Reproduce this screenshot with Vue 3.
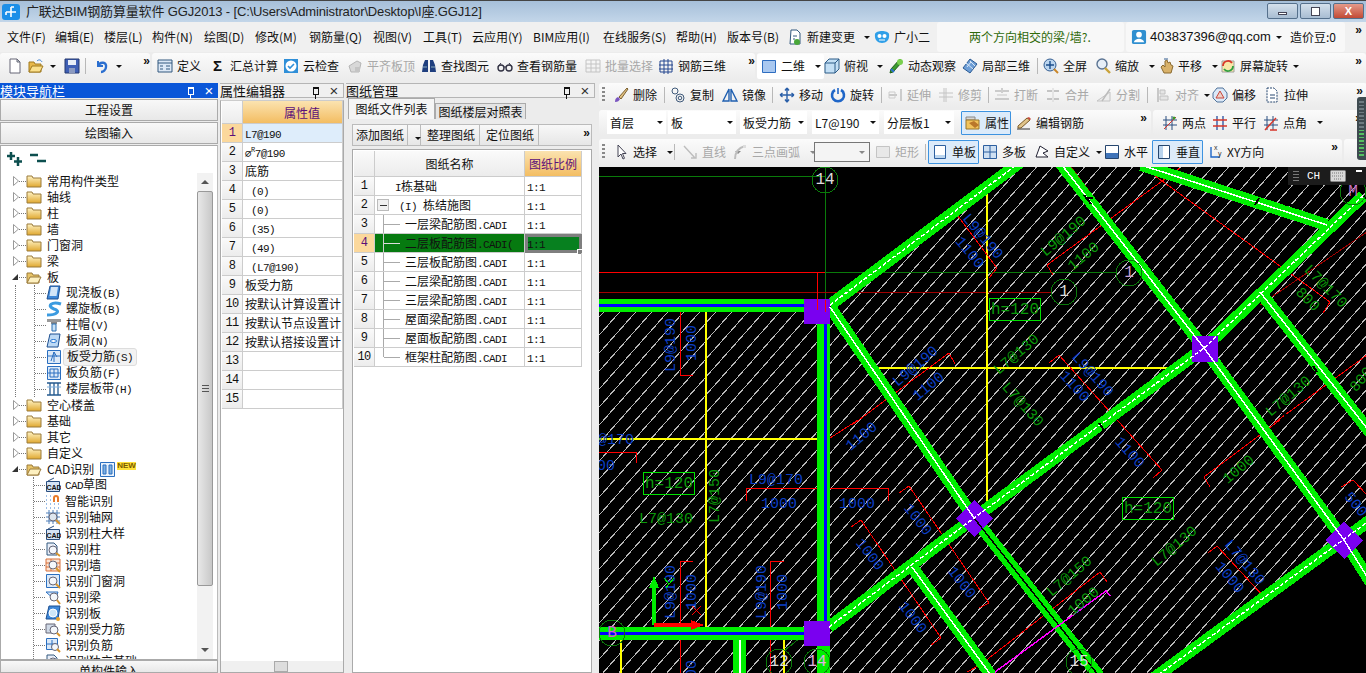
<script setup>
// menu entries with the distance to the next one
const menus = [['文件(F)', 48], ['编辑(E)', 49], ['楼层(L)', 48], ['构件(N)', 52], ['绘图(D)', 51], ['修改(M)', 54], ['钢筋量(Q)', 64], ['视图(V)', 50], ['工具(T)', 49], ['云应用(Y)', 61], ['BIM应用(I)', 70], ['在线服务(S)', 73], ['帮助(H)', 51], ['版本号(B)', 60]]

const icons = {
  page: '<path d="M3 1h7l3 3v11H3z" fill="#fff" stroke="#667"/><path d="M10 1v3h3z" fill="#cdd" stroke="#667"/>',
  open: '<path d="M1 14V4h5l1 2h6v8z" fill="#e8b84a" stroke="#a07a20"/><path d="M1 14l3-6h11l-3 6z" fill="#fbe08c" stroke="#a07a20"/><path d="M9 3c2-2 4-1 5 1" fill="none" stroke="#3a7fd0"/>',
  save: '<path d="M1 1h14v14H1z" fill="#3f5fb5" stroke="#24386f"/><path d="M4 2h8v5H4z" fill="#e8eef8"/><path d="M5 10h6v5H5z" fill="#8b9ac0"/>',
  undo: '<path d="M4 3v5h5" fill="none" stroke="#2b6fd0" stroke-width="2"/><path d="M4 8c2-5 9-4 8 1 0 3-3 5-5 5" fill="none" stroke="#2b6fd0" stroke-width="2.4"/>',
  def: '<path d="M1 2h14v12H1z" fill="#dce8f6" stroke="#33597f"/><path d="M1 5h14M3 8h3M3 11h3M9 8h4M9 11h4" stroke="#33597f"/>',
  sigma: '<text x="3" y="13" font-size="15" font-weight="700" font-family="Liberation Sans" fill="#111">Σ</text>',
  check: '<path d="M1 1h14v14H1z" fill="#2f8fd8"/><circle cx="8" cy="8" r="5.5" fill="#fff"/><path d="M5 8l2 2 4-4" fill="none" stroke="#2f8fd8" stroke-width="1.6"/>',
  flat: '<path d="M2 8l8-5 4 2-2 9H4z" fill="#d8d8d8" stroke="#b5b5b5"/><path d="M8 9h5v5H8z" fill="#c4c4c4"/>',
  binoc: '<path d="M2 7l2-5h3v12H1zM14 7l-2-5H9v12h6z" fill="#1f3f7f"/><path d="M2 9h4M10 9h4" stroke="#8ab" />',
  glasses: '<circle cx="4" cy="10" r="3" fill="none" stroke="#334" stroke-width="1.4"/><circle cx="12" cy="10" r="3" fill="none" stroke="#334" stroke-width="1.4"/><path d="M7 9h2M1 9l3-4M15 9l-3-4" stroke="#334"/>',
  grayGrid: '<path d="M1 2h14v12H1zM1 6h14M1 10h14M6 2v12M11 2v12" fill="none" stroke="#c4c4c4"/>',
  grid3d: '<path d="M2 3h12v11H2zM1 7h14M1 11h14M6 1v15M10 1v15" fill="none" stroke="#24478f"/>',
  square: '<path d="M1.500 2.500h13v12h-13z" fill="#a9c8f0" stroke="#2e6dc0"/>',
  cube: '<path d="M1 5l4-4h10v10l-4 4H1z" fill="#c3dff5" stroke="#2c5c88"/><path d="M1 5h10v10M11 5l4-4" fill="none" stroke="#2c5c88"/>',
  orbit: '<path d="M2 15l3-1 9-10-2-3-9 10z" fill="#3b9b2f" stroke="#1d5c15"/><circle cx="12" cy="4" r="3" fill="#7ad04e"/><path d="M3 11l3 3" stroke="#2b6fd0" stroke-width="2"/>',
  local: '<path d="M8 1l7 5-7 9-7-5z" fill="#6d9ed6" stroke="#2a5a94"/><path d="M4 5l7 6M8 3l5 5M5 9l4-5" stroke="#dce8f6"/>',
  full: '<circle cx="7" cy="7" r="6" fill="#bcd6ef" stroke="#345e92"/><path d="M7 3v8M3 7h8" stroke="#1b4d8c" stroke-width="1.4"/><path d="M11 11l4 4" stroke="#c9862a" stroke-width="2"/>',
  zoom: '<circle cx="7" cy="6" r="5" fill="#e6eef7" stroke="#5a7392" stroke-width="1.4"/><path d="M10 10l5 5" stroke="#c9a23a" stroke-width="2.400"/>',
  hand: '<path d="M3 9l3 6h7l2-7-2-1-1-3-2 1-1-3-2 1v6L5 7z" fill="#d9b26a" stroke="#8a6a30"/><path d="M6 1h4" stroke="#345e92"/>',
  rotScreen: '<path d="M2 3h12v11H2z" fill="#f7e7a8" stroke="#a0a0a0"/><path d="M3 8a5 5 0 0 1 9-3" fill="none" stroke="#d8362a" stroke-width="1.8"/><path d="M13 8a5 5 0 0 1-9 3" fill="none" stroke="#2f9f3f" stroke-width="1.8"/>',
  del: '<path d="M2 15c0-3 1-4 3-5l2 2c-1 2-2 3-5 3z" fill="#7a55c0"/><path d="M6 10l8-9 1 1-7 10z" fill="#e0c080" stroke="#7a6030"/>',
  copy: '<circle cx="5" cy="4" r="3" fill="none" stroke="#405a7a"/><circle cx="10" cy="11" r="4" fill="none" stroke="#405a7a"/><circle cx="10" cy="11" r="1.800" fill="none" stroke="#405a7a"/>',
  mirror: '<path d="M7 2v12H1zM9 2v12h6z" fill="none" stroke="#1f5fb0" stroke-width="1.400"/>',
  move: '<path d="M8 1v14M1 8h14M8 1L6 3.500M8 1l2 2.500M8 15l-2-2.500M8 15l2-2.500M1 8l2.500-2M1 8l2.500 2M15 8l-2.500-2M15 8l-2.500 2" fill="none" stroke="#2a5fa8" stroke-width="1.400"/>',
  rot: '<path d="M5 3a6 6 0 1 0 6 0" fill="none" stroke="#1f66c8" stroke-width="2.600"/><path d="M8 1v6" stroke="#1f66c8" stroke-width="1.600"/>',
  extend: '<path d="M14 2v12M2 8h8" fill="none" stroke="#bbb" stroke-width="1.400"/><path d="M2 5h6v6H2z" fill="none" stroke="#ccc"/>',
  trim: '<path d="M1 6h14M1 10h14M8 1v14M6 1v14" stroke="#c4c4c4"/>',
  cut: '<path d="M1 4h6M9 4h6M1 12h14M8 1v5" stroke="#bdbdbd" stroke-width="1.400"/><path d="M3 7h10v2H3z" fill="#ddd"/>',
  merge: '<path d="M2 4h5M9 4h5M2 12h5M9 12h5" stroke="#c4c4c4" stroke-width="2"/><path d="M8 1v14" stroke="#d4d4d4"/>',
  split: '<path d="M1 14h13V5z" fill="#eee" stroke="#c4c4c4"/><path d="M6 14l8-12" stroke="#bbb" stroke-width="1.400"/>',
  align: '<path d="M3 1v14" stroke="#b5b5b5" stroke-width="1.400"/><path d="M5 3h5v4H5zM5 9h8v4H5z" fill="#e5e5e5" stroke="#c0c0c0"/>',
  offset: '<path d="M5 1h6l4 5v5l-4 4H5l-4-4V6z" fill="#dbe9f8" stroke="#50739a"/><path d="M8 4l4 7H4z" fill="#ecd0c8" stroke="#c9473a"/>',
  stretch: '<path d="M3 1h7l3 3v11H3z" fill="#fff" stroke="#26466f" stroke-dasharray="2 1"/><path d="M6 8h5M6 11h5" stroke="#26466f"/>',
  attr: '<path d="M1 2h9v3H1z" fill="#d6d6d6" stroke="#888"/><path d="M1 5h13v9H1z" fill="#f2c45c" stroke="#99762a"/><path d="M4 8l6 5 4-3-5-4z" fill="#b9772a"/>',
  edit: '<path d="M1 14h13" stroke="#333"/><path d="M2 11l9-8 3 2-9 8H2z" fill="#e0c48a" stroke="#7a5a28"/><path d="M11 3l2-1 2 2-1 1" fill="#c9473a"/>',
  twoPt: '<path d="M4 15V1M10 15V1M1 10h14M1 5h14" stroke="#2a4f80"/><path d="M2 14L14 2" stroke="#d8362a"/><circle cx="12" cy="3" r="1.500" fill="#3a9b2f"/>',
  par: '<path d="M5 1v14M11 1v14" stroke="#2a4f9f" stroke-width="1.300"/><path d="M1 5h14M1 11h14" stroke="#d8362a" stroke-width="1.300"/>',
  angle: '<path d="M4 1v14M10 1v14M1 5h14M1 10h14" stroke="#2a4f80"/><path d="M2 15L13 3M7 15h7" stroke="#d8362a" stroke-width="1.400"/>',
  arrow: '<path d="M5 1v12l3-3 2 5 1.500-.7-2-4.800h3.500z" fill="#fff" stroke="#445"/>',
  lineGray: '<path d="M2 2l11 12M9 14h5V9" fill="none" stroke="#bdbdbd" stroke-width="1.400"/>',
  arcGray: '<path d="M3 15C3 8 6 4 13 2" fill="none" stroke="#bdbdbd" stroke-width="2"/><path d="M11 1h3v3h-3z" fill="#ddd"/>',
  rect: '<path d="M1.500 2.500h13v11h-13z" fill="#e8e8e8" stroke="#c4c4c4"/>',
  single: '<path d="M2.500 1.500h11v13h-11z" fill="#fff" stroke="#2d5f9f"/><path d="M3 11h10v3H3z" fill="#bcd6ef"/>',
  multi: '<path d="M1.500 1.500h13v13h-13zM8 1v14M1 8h14" fill="#cfe0f2" stroke="#2d5f9f"/>',
  custom: '<path d="M2 13L6 2l8 5-5 2 5 4z" fill="#fff" stroke="#223"/>',
  horiz: '<path d="M1.500 1.500h13v13h-13z" fill="#fff" stroke="#26466f"/><path d="M2 9h12v5H2z" fill="#3f73b8"/>',
  vert: '<path d="M2.500 1.500h11v13h-11z" fill="#fff" stroke="#26466f"/><path d="M3 2h4v12H3z" fill="#b8d3ee"/>',
  xy: '<path d="M4 3v10h9" fill="none" stroke="#1f66c8" stroke-width="1.400"/><text x="7" y="6" font-size="7" font-family="Liberation Sans" fill="#333">x</text><text x="11" y="12" font-size="7" font-family="Liberation Sans" fill="#333">y</text>',
  bell: '<path d="M4 1h6l3 3v11H3z" fill="#fff" stroke="#33597f"/><path d="M6 7h4M6 10h2" stroke="#33597f"/><circle cx="10" cy="13" r="3" fill="#4aa83a"/>',
  robot: '<path d="M1 5c1-4 13-4 14 0 1 6-3 9-7 9s-8-3-7-9z" fill="#2f9fe8"/><circle cx="5.500" cy="7" r="2" fill="#fff"/><circle cx="10.500" cy="7" r="2" fill="#fff"/><path d="M5 11h6" stroke="#fff"/>',
  user: '<rect x="1" y="1" width="15" height="15" rx="2" fill="#2f8fd0"/><circle cx="8.500" cy="6" r="3" fill="#fff"/><path d="M3 14c1-5 10-5 11 0z" fill="#fff"/>',
  // tree
  slab: '<path d="M4 1h10l-2 13H1z" fill="#3f88d8" stroke="#1d4f90"/><path d="M5 2h7l-1.500 9H3.500z" fill="#d4e6f8"/>',
  spiral: '<path d="M15 3C6 0 0 5 8 8c7 2 3 6-7 6" fill="none" stroke="#3b9be0" stroke-width="3"/>',
  cap: '<path d="M1 2h14v3H1z" fill="#9a9a9a"/><path d="M5 5h6v2H5z" fill="#888"/><path d="M6 7h4v7H6z" fill="#c9e2f7" stroke="#2a6fb0"/>',
  hole: '<path d="M4 1h10l-2 13H1z" fill="#bcd9f5" stroke="#1d4f90"/><ellipse cx="7.500" cy="8" rx="3" ry="1.500" fill="#fff" stroke="#1d6fd0"/>',
  rebar: '<path d="M1.500 1.500h13v13h-13z" fill="#dbe9f8" stroke="#2a6fc0"/><path d="M1 7h14M8 3v10" stroke="#2a6fc0"/><path d="M5 12l3-9 3 5" fill="none" stroke="#2a6fc0"/>',
  neg: '<path d="M1.500 1.500h13v13h-13z" fill="#dbe9f8" stroke="#2a6fc0"/><path d="M4 4h8v8H4zM1 8h14M8 4v8" fill="none" stroke="#2a6fc0"/>',
  band: '<path d="M1 2h14M1 14h14M4 2v12M8 2v12M12 2v12" stroke="#24598f" stroke-width="1.300"/><path d="M1 6h14" stroke="#7fb0e0"/>',
  cad: '<path d="M1.500 4.500h13v10h-13z" fill="#d6e4f5" stroke="#2a4f80"/><text x="1.500" y="13" font-size="7" font-weight="700" font-family="Liberation Sans" fill="#111">CAD</text><path d="M3 4l6-3" stroke="#2a4f80"/>',
  magnet: '<path d="M1 3h1M5 3h1M1 7h1M5 7h1M1 11h1M5 11h1M9 11h1M13 11h1M1 15h1M5 15h1M9 15h1M13 15h1" stroke="#3a7fd0"/><path d="M8 9V5a3 3 0 0 1 6 0v4h-2V5a1 1 0 0 0-2 0v4z" fill="#e87a2a"/>',
  findGrid: '<path d="M1 4h14M1 8h14M1 12h14M4 1v14M8 1v14M12 1v14" stroke="#4f7fb8"/><circle cx="8" cy="8" r="4" fill="#dfe6ee" stroke="#667"/><path d="M11 11l4 4" stroke="#d8942a" stroke-width="2"/>',
  findCol: '<path d="M2 2h7l3 3v9H2z" fill="#e8eef8" stroke="#33597f"/><circle cx="8" cy="9" r="4" fill="#f4f7fb" stroke="#667"/><path d="M11 12l4 3" stroke="#d8942a" stroke-width="2"/>',
  findWall: '<path d="M1 2h14v12H1zM1 6h14M1 10h14M6 2v4M11 6v4M6 10v4" fill="#fbe4d4" stroke="#d8703a"/><circle cx="8" cy="8" r="4" fill="#f4f7fb" stroke="#667"/><path d="M11 11l4 4" stroke="#d8942a" stroke-width="2"/>',
  findDoor: '<path d="M1.500 1.500h13v13h-13z" fill="#dbe9f8" stroke="#2a6fc0"/><circle cx="8" cy="8" r="4" fill="#f4f7fb" stroke="#667"/><path d="M11 11l4 4" stroke="#d8942a" stroke-width="2"/>',
  findBeam: '<path d="M1 3h12l-3 8z" fill="#dbe9f8" stroke="#2a6fc0"/><circle cx="9" cy="8" r="4" fill="#f4f7fb" stroke="#667"/><path d="M12 11l3 4" stroke="#d8942a" stroke-width="2"/>',
  findSlab: '<path d="M4 1h11l-2 13H1z" fill="#3f88d8" stroke="#1d4f90"/><circle cx="8" cy="8" r="4" fill="#cde6f8" stroke="#fff"/><circle cx="13" cy="14" r="2" fill="#e8a02a"/>',
  findBar: '<path d="M1 3h9v9H1z" fill="#cfd9e6" stroke="#667"/><circle cx="9" cy="9" r="4" fill="#f4f7fb" stroke="#667"/><path d="M12 12l3 3" stroke="#d8942a" stroke-width="2"/>',
  findNeg: '<path d="M1.500 1.500h11v11h-11zM1 7h12M7 3v8" fill="#dbe9f8" stroke="#2a6fc0"/><circle cx="10" cy="10" r="3.500" fill="#f4f7fb" stroke="#667"/><path d="M12 12l3 3" stroke="#d8942a" stroke-width="2"/>',
}

// width = distance to the next item's left edge in the toolbar
function T(i, t, w, opts = {}) {
  return { i, t, w, ...opts }
}
const SEP = w => ({ sep: true, w })

const row1a = [T('page', '', 21), T('open', '', 36, { arrow: 2 }), T('save', '', 21), SEP(9), T('undo', '', 30, { arrow: 2 })]
const row1b = [
  T('def', '定义', 53), T('sigma', '汇总计算', 73), T('check', '云检查', 64), T('flat', '平齐板顶', 74, { gray: true }),
  T('binoc', '查找图元', 76), T('glasses', '查看钢筋量', 88), T('grayGrid', '批量选择', 73, { gray: true }), T('grid3d', '钢筋三维', 68),
]
const row1c = [
  T('square', '二维', 67, { white: true, arrow: 6 }), T('cube', '俯视', 64, { arrow: 5 }), T('orbit', '动态观察', 74), T('local', '局部三维', 75), SEP(6),
  T('full', '全屏', 52), T('zoom', '缩放', 63, { arrow: 6 }), T('hand', '平移', 62, { arrow: 6 }), T('rotScreen', '屏幕旋转', 90, { arrow: 1 }),
]
const row2 = [
  T('del', '删除', 51), SEP(6), T('copy', '复制', 52), T('mirror', '镜像', 50), SEP(7), T('move', '移动', 51), T('rot', '旋转', 51), SEP(6),
  T('extend', '延伸', 51, { gray: true }), T('trim', '修剪', 50, { gray: true }), SEP(6), T('cut', '打断', 51, { gray: true }), T('merge', '合并', 51, { gray: true }),
  T('split', '分割', 51, { gray: true }), SEP(8), T('align', '对齐', 57, { gray: true, arrow: 1 }), T('offset', '偏移', 52), T('stretch', '拉伸', 50),
]
const selects = [
  { t: '首层', w: 59, m: 0 }, { t: '板', w: 68, m: 2 }, { t: '板受力筋', w: 67, m: 4 },
  { t: 'L7@190', w: 67, m: 5 }, { t: '分层板1', w: 70, m: 5 },
]
const row3a = [T('attr', '属性', 50, { on: true }), T('edit', '编辑钢筋', 70, { m: 5 })]
const row3b = [T('twoPt', '两点', 50), T('par', '平行', 51), T('angle', '点角', 56, { arrow: 6 })]
const row4a = [T('arrow', '选择', 61, { arrow: 6 }), SEP(8), T('lineGray', '直线', 50, { gray: true }), T('arcGray', '三点画弧', 82, { gray: true, arrow: 6 })]
const row4b = [
  T('rect', '矩形', 50, { gray: true, m: 5 }), SEP(3), T('single', '单板', 51, { on: true }), T('multi', '多板', 52, { m: 3 }), T('custom', '自定义', 70, { arrow: 2 }),
  T('horiz', '水平', 48), T('vert', '垂直', 51, { on: true }), T('xy', 'XY方向', 62, { m: 4 }),
]

const tree = [
  { t: '常用构件类型' }, { t: '轴线' }, { t: '柱' }, { t: '墙' }, { t: '门窗洞' }, { t: '梁' },
  {
    t: '板', open: true, more: true,
    kids: [['slab', '现浇板(B)'], ['spiral', '螺旋板(B)'], ['cap', '柱帽(V)'], ['hole', '板洞(N)'], ['rebar', '板受力筋(S)', true], ['neg', '板负筋(F)'], ['band', '楼层板带(H)']],
  },
  { t: '空心楼盖' }, { t: '基础' }, { t: '其它' }, { t: '自定义' },
  {
    t: 'CAD识别', open: true, isNew: true,
    kids: [['cad', 'CAD草图'], ['magnet', '智能识别'], ['findGrid', '识别轴网'], ['cad', '识别柱大样'], ['findCol', '识别柱'], ['findWall', '识别墙'], ['findDoor', '识别门窗洞'], ['findBeam', '识别梁'], ['findSlab', '识别板'], ['findBar', '识别受力筋'], ['findNeg', '识别负筋'], ['findCol', '识别独立基础']],
  },
]

const attrs = ['L7@190', 'R', '底筋', ' (0)', ' (0)', ' (35)', ' (49)', ' (L7@190)', '板受力筋', '按默认计算设置计', '按默认节点设置计', '按默认搭接设置计', '', '', '']

const sheets = [
  ['I栋基础', 0], ['(I) 栋结施图', 1], ['一层梁配筋图.CADI', 2], ['二层板配筋图.CADI(', 2], ['三层板配筋图.CADI', 2],
  ['二层梁配筋图.CADI', 2], ['三层梁配筋图.CADI', 2], ['屋面梁配筋图.CADI', 2], ['屋面板配筋图.CADI', 2], ['框架柱配筋图.CADI', 2],
]

// latin parts use a bitmap-ish narrow mono, like the old Windows grid font
function runs(s) {
  return (s.match(/[\x20-\x7e]+|[^\x20-\x7e]+/g) || []).map(x => ({ x, lat: /^[\x20-\x7e]/.test(x) }))
}

// --- drawing ---
const beams = [
  { p: '829,305 1022,160', c: '#fff', dash: '4 2' },
  { p: '829,307 973,518', c: '#fff' },
  { p: '973,518 1098,676', c: '#000' },
  { p: '1057,160 1203,348 1343,540 1372,586', c: '#fff' },
  { p: '1140,165 1326,225', c: '#fff' },
  { p: '828,627 973,518 1203,348 1362,196', c: '#fff', dash: '4 2' },
  { p: '1259,292 1372,436', c: '#fff' },
  { p: '911,567 992,678', c: '#fff' },
  { p: '1153,678 1372,518', c: '#fff', dash: '4 2' },
]
const redLines = [
  '679,302 679,375', '679,302 692,302', '679,375 692,375',
  '851,425 948,353 954,364', '945,218 954,212 996,268 988,278',
  '1046,265 1179,168', '1046,265 1052,275', '1048,363 1058,355 1161,470 1152,478',
  '1143,168 1329,302 1322,313', '1273,423 1366,355',
  '598,452 635,452 635,463', '745,501 745,488 887,488 887,501',
  '898,493 908,486 988,603 978,608', '850,527 860,520 940,638 930,645',
  '692,561 679,561 679,673', '783,561 769,561 769,673',
  '828,446 826,440 857,420',
  '1203,477 1209,487', '1203,477 1279,420', '1106,582 1099,572 979,665 966,672',
  '1207,553 1216,546 1263,597 1256,608', '1340,487 1352,480 1366,495',
]
const darkRed = ['1259,305 1366,232', '1070,167 1196,335', '831,318 915,425']
const labels = [
  ['L9@190', 670, 345, -90, 'b'], ['1000', 691, 343, -90, 'b'], ['L9@190', 915, 367, -40, 'b'], ['1100', 928, 387, -40, 'b'],
  ['L9@190', 981, 237, 50, 'b'], ['1100', 968, 253, 50, 'b'], ['L9@190', 1063, 237, -40, 'g'], ['1100', 1083, 257, -40, 'g'],
  ['L7@130', 1016, 355, -40, 'g'], ['L7@130', 1021, 405, 48, 'g'], ['L9@190', 1091, 375, 48, 'b'], ['1100', 1073, 387, 48, 'b'],
  ['L7@170', 1324, 287, 45, 'g'], ['800', 1306, 300, 45, 'g'], ['L7@130', 1288, 397, -40, 'g'], ['800', 1361, 380, -50, 'g'],
  ['L9@170', 606, 440, 0, 'b'], ['1000', 596, 466, 0, 'b'], ['L7@130', 665, 519, 0, 'g'], ['L7@150', 714, 496, -90, 'g'],
  ['L9@170', 775, 480, 0, 'b'], ['1000', 778, 504, 0, 'b'], ['1000', 856, 504, 0, 'b'],
  ['1000', 916, 520, 52, 'b'], ['1000', 868, 555, 52, 'b'], ['1000', 960, 583, 52, 'b'], ['1000', 911, 618, 52, 'b'],
  ['L9@190', 670, 592, -90, 'b'], ['1000', 691, 592, -90, 'b'], ['L9@190', 761, 592, -90, 'b'], ['1000', 782, 592, -90, 'b'],
  ['1000', 691, 678, -90, 'b'], ['1100', 861, 437, -40, 'b'], ['1100', 1128, 453, 48, 'b'], ['1000', 1238, 470, -40, 'g'],
  ['L7@130', 1174, 547, -40, 'g'], ['L7@150', 1069, 577, -40, 'g'], ['1000', 1083, 602, -40, 'g'],
  ['L7@130', 1243, 563, 50, 'b'], ['1000', 1228, 578, 50, 'b'], ['500', 1354, 505, 50, 'b'],
]
const boxes = [[988, 298], [642, 472], [1121, 497]]
const bubbles = [
  ['14', 824, 180, '#ddd'], ['1', 1063, 292, '#ddd'], ['1', 1128, 273, '#c9a0d0'], ['B', 611, 633, '#d060d0'],
  ['12', 778, 662, '#ddd'], ['14', 816, 662, '#e0b0e0'], ['15', 1078, 662, '#ddd'], ['M', 1352, 192, '#c070c0'],
]
const ticks = ['1083,195 1090,204', '1254,205 1258,198', '1084,198 1092,198', '1284,205 1292,205', '1312,366 1316,372', '1282,412 1288,420', '1098,423 1103,430', '1245,422 1251,430']
const meter = Array.from({ length: 16 }, (_, i) => i)
</script>

<template>
  <div class="app">
    <header class="titlebar">
      <svg class="logo" viewBox="0 0 18 16"><rect width="18" height="16" rx="3" fill="#1c8fe8" /><path d="M9 3v10M4 8h10M9 3h3M4 8v3" fill="none" stroke="#fff" stroke-width="1.600" /></svg>
      <span class="title-text">广联达BIM钢筋算量软件 GGJ2013 - [C:\Users\Administrator\Desktop\I座.GGJ12]</span>
      <div class="winbtns">
        <span class="winbtn"><i class="w-min"></i></span>
        <span class="winbtn"><i class="w-max"></i></span>
        <span class="winbtn close">X</span>
      </div>
    </header>

    <nav class="menubar">
      <span v-for="m in menus" :key="m[0]" class="menu" :style="{ width: m[1] + 'px' }">{{ m[0] }}</span>
      <span class="menu-tool w-change"><svg class="ic" viewBox="0 0 16 16" v-html="icons.bell"></svg>新建变更<b class="caret"></b></span>
      <span class="menu-tool w-guang"><svg class="ic" viewBox="0 0 16 16" v-html="icons.robot"></svg>广小二</span>
      <div class="hint">两个方向相交的梁/墙?.</div>
      <div class="account">
        <svg class="ic" viewBox="0 0 17 17" v-html="icons.user"></svg>
        <span class="mail">403837396@qq.com</span><b class="caret"></b>
        <span class="bean">造价豆:0</span>
      </div>
      <span class="more">»</span>
    </nav>

    <div class="tbar top">
      <div class="tgroup g1a">
        <template v-for="(t, n) in row1a" :key="n">
          <span v-if="t.sep" class="sep" :style="{ width: t.w + 'px' }"></span>
          <span v-else class="tool" :style="{ width: t.w + 'px' }"><svg class="ic" viewBox="0 0 16 16" v-html="icons[t.i]"></svg><b v-if="t.arrow" class="caret" :style="{ marginLeft: t.arrow + 'px' }"></b></span>
        </template>
        <span class="more">»</span>
      </div>
      <div class="tgroup g1b">
        <span v-for="t in row1b" :key="t.t" class="tool" :class="{ gray: t.gray }" :style="{ width: t.w + 'px' }"><svg class="ic" viewBox="0 0 16 16" v-html="icons[t.i]"></svg>{{ t.t }}</span>
        <span class="more">»</span>
      </div>
      <div class="tgroup g1c">
        <template v-for="(t, n) in row1c" :key="n">
          <span v-if="t.sep" class="sep" :style="{ width: t.w + 'px' }"></span>
          <span v-else class="tool" :class="{ white: t.white }" :style="{ width: t.w + 'px' }"><svg class="ic" viewBox="0 0 16 16" v-html="icons[t.i]"></svg>{{ t.t }}<b v-if="t.arrow" class="caret" :style="{ marginLeft: t.arrow + 'px' }"></b></span>
        </template>
        <span class="more">»</span>
      </div>
    </div>

    <div class="main">
      <section class="panel nav">
        <div class="phead active"><span>模块导航栏</span><span class="ptools"><i class="pin"></i><i class="px">×</i></span></div>
        <button class="navbtn">工程设置</button>
        <button class="navbtn">绘图输入</button>
        <div class="treebox">
          <div class="expand">
            <svg width="18" height="16" viewBox="0 0 18 16"><path d="M5 1v8M1 5h8M12 6v9M8 10.500h8" fill="none" stroke="#0d4f4f" stroke-width="2.500" /></svg>
            <svg width="18" height="16" viewBox="0 0 18 16"><path d="M1 4h8M8 10h9" fill="none" stroke="#0d4f4f" stroke-width="2.500" /></svg>
          </div>
          <div class="treewrap">
            <div class="tree">
              <template v-for="f in tree" :key="f.t">
                <div class="trow">
                  <i v-if="f.open" class="tri down"></i>
                  <svg v-else class="tri-closed" viewBox="0 0 6 10"><path d="M.5.500L5.500 5 .5 9.500z" fill="#fff" stroke="#999" /></svg>
                  <i class="dots d1"></i>
                  <svg class="folder" viewBox="0 0 16 14">
                    <defs>
                      <linearGradient id="fold" x1="0" y1="0" x2="0" y2="1"><stop offset="0" stop-color="#fff3c4" /><stop offset="1" stop-color="#e0a830" /></linearGradient>
                    </defs>
                    <template v-if="f.open"><path d="M1 13V3h5l1 2h6v8z" fill="#e8c468" stroke="#9a7a3a" /><path d="M1 13l3-6h11l-3 6z" fill="#fdf0c0" stroke="#9a7a3a" /></template>
                    <template v-else><path d="M1 13V2h5l1 2h8v9z" fill="url(#fold)" stroke="#9a7a3a" /></template>
                  </svg>
                  <span class="tlabel">{{ f.t }}</span>
                  <template v-if="f.isNew">
                    <svg class="newbox" viewBox="0 0 15 15"><path d="M.500.500h14v14H.500z" fill="#eaf2fb" stroke="#2a6fc0" /><path d="M3 3h3v9H3zM9 3h3v9H9z" fill="#7fb0e0" stroke="#2a6fc0" /></svg>
                    <span class="newtag">NEW</span>
                  </template>
                </div>
                <div v-if="f.kids" class="kids" :class="{ cont: f.more }">
                  <div class="kids-in">
                    <div v-for="k in f.kids" :key="k[1]" class="trow kid">
                      <i class="dots d2"></i>
                      <svg class="kicon" viewBox="0 0 16 16" v-html="icons[k[0]]"></svg>
                      <span class="tlabel" :class="{ sel: k[2] }"><span v-for="(r, j) in runs(k[1])" :key="j" :class="{ lat: r.lat }">{{ r.x }}</span></span>
                    </div>
                  </div>
                </div>
              </template>
            </div>
            <div class="vscroll">
              <span class="sarrow up"></span>
              <div class="thumb"><i></i></div>
              <span class="sarrow dn"></span>
            </div>
          </div>
        </div>
        <button class="navbtn last">单构件输入</button>
      </section>

      <section class="panel attr">
        <div class="phead"><span>属性编辑器</span><span class="ptools"><i class="pin dark"></i><i class="px dark">×</i></span></div>
        <div class="agrid">
          <div class="arow ahead"><span class="num"></span><span class="cell hd">属性值</span></div>
          <div v-for="(v, n) in attrs" :key="n" class="arow" :class="{ cur: n === 0 }">
            <span class="num">{{ n + 1 }}</span>
            <span class="cell">
              <template v-if="v === 'R'"><span class="lat">⌀<sup>R</sup>7@190</span></template>
              <template v-else><span v-for="(r, j) in runs(v)" :key="j" :class="{ lat: r.lat }">{{ r.x }}</span></template>
            </span>
          </div>
          <div class="hscroll"><i></i></div>
        </div>
      </section>

      <section class="panel mgr">
        <div class="phead"><span>图纸管理</span><span class="ptools wide"><i class="pin dark"></i><i class="px dark">×</i></span></div>
        <div class="tabs"><span class="tab on">图纸文件列表</span><span class="tab">图纸楼层对照表</span></div>
        <div class="mtools">
          <span class="mbtn b1">添加图纸</span><span class="mbtn b2"><b class="caret"></b></span><span class="mbtn b3">整理图纸</span><span class="mbtn b3">定位图纸</span>
          <span class="more mmore">»</span>
        </div>
        <div class="sheet">
          <div class="srow shead"><span class="num"></span><span class="sname hd2">图纸名称</span><span class="sratio hd3">图纸比例</span></div>
          <div v-for="(s, n) in sheets" :key="n" class="srow" :class="{ cur: n === 3 }">
            <span class="num">{{ n + 1 }}</span>
            <span class="sname" :class="'lv' + s[1]">
              <i v-if="s[1] === 1" class="minus"></i>
              <i v-if="s[1] === 2" class="branch" :class="{ end: n === 9 }"></i>
              <span v-for="(r, j) in runs(s[0])" :key="j" :class="{ lat: r.lat }">{{ r.x }}</span>
            </span>
            <span class="sratio"><span class="lat">1:1</span><i v-if="n === 3" class="handle"></i></span>
          </div>
        </div>
      </section>

      <section class="work">
        <div class="tbar r2">
          <i class="grip"></i>
          <template v-for="(t, n) in row2" :key="n">
            <span v-if="t.sep" class="sep" :style="{ width: t.w + 'px' }"></span>
            <span v-else class="tool" :class="{ gray: t.gray }" :style="{ width: t.w + 'px' }"><svg class="ic" viewBox="0 0 16 16" v-html="icons[t.i]"></svg>{{ t.t }}<b v-if="t.arrow" class="caret" :style="{ marginLeft: t.arrow + 'px' }"></b></span>
          </template>
          <span class="more">»</span>
        </div>
        <div class="tbar r3">
          <div class="tgroup g3a">
            <span v-for="s in selects" :key="s.t" class="combo" :style="{ width: s.w + 'px', marginLeft: s.m + 'px' }">{{ s.t }}<b class="caret"></b></span>
            <span v-for="t in row3a" :key="t.t" class="tool" :class="{ on: t.on }" :style="{ width: t.w + 'px', marginLeft: (t.m || 7) + 'px' }"><svg class="ic" viewBox="0 0 16 16" v-html="icons[t.i]"></svg>{{ t.t }}</span>
            <span class="more">»</span>
          </div>
          <div class="tgroup g3b">
            <span v-for="t in row3b" :key="t.t" class="tool" :style="{ width: t.w + 'px' }"><svg class="ic" viewBox="0 0 16 16" v-html="icons[t.i]"></svg>{{ t.t }}<b v-if="t.arrow" class="caret" :style="{ marginLeft: t.arrow + 'px' }"></b></span>
            <span class="more">»</span>
          </div>
        </div>
        <div class="tbar r4">
          <div class="tgroup g4a">
            <i class="grip"></i>
            <template v-for="(t, n) in row4a" :key="n">
              <span v-if="t.sep" class="sep" :style="{ width: t.w + 'px' }"></span>
              <span v-else class="tool" :class="{ gray: t.gray }" :style="{ width: t.w + 'px' }"><svg class="ic" viewBox="0 0 16 16" v-html="icons[t.i]"></svg>{{ t.t }}<b class="caret" :class="{ light: t.gray }" :style="{ marginLeft: t.arrow + 'px' }"></b></span>
            </template>
            <span class="blank"><b class="caret light"></b></span>
            <template v-for="(t, n) in row4b" :key="'b' + n">
              <span v-if="t.sep" class="sep" :style="{ width: t.w + 'px' }"></span>
              <span v-else class="tool" :class="{ gray: t.gray, on: t.on }" :style="{ width: t.w + 'px', marginLeft: (t.m || 0) + 'px' }"><svg class="ic" viewBox="0 0 16 16" v-html="icons[t.i]"></svg>{{ t.t }}<b v-if="t.arrow" class="caret" :style="{ marginLeft: t.arrow + 'px' }"></b></span>
            </template>
            <span class="more">»</span>
          </div>
          <div class="tgroup g4b"></div>
        </div>

        <div class="canvas">
          <svg class="cad" width="768" height="506" viewBox="598 167 768 506" shape-rendering="crispEdges">
            <defs>
              <pattern id="hatch" width="16" height="18" patternUnits="userSpaceOnUse">
                <path d="M-1 19L17 -1" stroke="#b8b8b8" stroke-width="1" fill="none" />
              </pattern>
            </defs>
            <rect x="598" y="167" width="768" height="506" fill="#000" />
            <polygon points="598,305 829,305 1022,160 1366,160 1366,522 1156,673 598,673" fill="url(#hatch)" />

            <path d="M598 176H824M824 167V300M824 272H1116M986 292H1050" stroke="#0a7a0a" fill="none" />
            <path d="M598 272H824M816 272V673" stroke="#ff0000" fill="none" />
            <path d="M598 292H1050" stroke="#a00000" fill="none" />
            <path d="M783 651L815 625" stroke="#0a7a0a" fill="none" />

            <path d="M705 307V627M598 439H816M871 368H1176M986 187V508M620 640V673M783 640V673" stroke="#ffff00" stroke-width="2" fill="none" />

            <polyline v-for="p in redLines" :key="p" :points="p" fill="none" stroke="#ff0000" />
            <polyline v-for="p in darkRed" :key="p" :points="p" fill="none" stroke="#a00000" />

            <polyline v-for="b in beams" :key="b.p" :points="b.p" fill="none" stroke="#00ee00" stroke-width="12" />

            <rect x="598" y="299" width="218" height="13" fill="#00ee00" />
            <rect x="598" y="304" width="218" height="3" fill="#0000ff" />
            <rect x="816" y="312" width="13" height="361" fill="#00ee00" />
            <rect x="823" y="312" width="3" height="322" fill="#0000ff" />
            <rect x="598" y="627" width="218" height="13" fill="#00ee00" />
            <rect x="598" y="632" width="228" height="3" fill="#0000ff" />
            <rect x="732" y="640" width="13" height="33" fill="#00ee00" />
            <rect x="738" y="640" width="2" height="33" fill="#fff" />

            <path d="M803 299H829V324H803zM803 621H829V646H803zM1191 336H1217V362H1191z" fill="#7a00f0" />
            <path d="M973 500L992 518 973 537 955 518zM1343 522L1362 540 1343 559 1324 540z" fill="#7a00f0" />
            <polyline v-for="b in beams" :key="'c' + b.p" :points="b.p" fill="none" :stroke="b.c" stroke-width="1.500" :stroke-dasharray="b.dash" />
            <path d="M816 272V310M824 300V312" stroke="#ff0000" fill="none" />

            <path d="M994 672L1105 591 1109 596" stroke="#ff00ff" stroke-width="1.500" fill="none" />
            <polyline v-for="p in ticks" :key="p" :points="p" stroke="#000" stroke-width="2" fill="none" />

            <g class="cadtext">
              <text v-for="l in labels" :key="l[0] + l[1] + l[2]" :x="l[1]" :y="l[2]" :fill="l[4] === 'b' ? '#0c3fc4' : '#0a9a0a'" text-anchor="middle" dominant-baseline="central" :transform="`rotate(${l[3]} ${l[1]} ${l[2]})`">{{ l[0] }}</text>
            </g>

            <g v-for="b in boxes" :key="b[0]">
              <rect :x="b[0] + 0.5" :y="b[1] + 0.5" width="51" height="22" fill="none" stroke="#00e000" />
              <text class="boxtext" :x="b[0] + 26" :y="b[1] + 12" fill="#0a9a0a" text-anchor="middle" dominant-baseline="central">h=120</text>
            </g>

            <g v-for="c in bubbles" :key="c[0] + c[1]">
              <circle :cx="c[1]" :cy="c[2]" r="13" fill="none" stroke="#0a7a0a" />
              <text class="bubble" :x="c[1]" :y="c[2]" :fill="c[3]" text-anchor="middle" dominant-baseline="central">{{ c[0] }}</text>
            </g>

            <path d="M653 625V583" stroke="#00ee00" stroke-width="4" fill="none" />
            <path d="M653 576L648 588H658z" fill="#00ee00" />
            <path d="M653 625H692" stroke="#ff0000" stroke-width="4" fill="none" />
            <path d="M703 625L690 620V630z" fill="#ff0000" />
            <path d="M663 578L668 584 673 578M668 584L665 588" stroke="#00ee00" fill="none" />
            <path d="M691 606L700 615M700 606L691 615" stroke="#ff0000" fill="none" />
          </svg>
          <div class="ime">
            <i class="imegrip"></i><span class="ch">CH</span>
            <svg width="16" height="12" viewBox="0 0 16 12"><rect x=".5" y=".5" width="15" height="11" rx="1" fill="#d8d8d8" stroke="#888" /><path d="M2 3h12M2 6h12M4 9h8" stroke="#777" stroke-dasharray="1 1" /></svg>
            <span class="imearr"></span>
          </div>
        </div>
      </section>
    </div>

    <div class="levels"><i v-for="n in meter" :key="n" :class="{ lit: n > 7 }"></i></div>
  </div>
</template>

<style scoped>
.app {
  position: relative;
  width: 1366px;
  height: 673px;
  overflow: hidden;
  display: flex;
  flex-direction: column;
  background: #ececec;
  color: #111;
  font: 12px/16px "Noto Sans CJK SC", "Liberation Sans", sans-serif;
  white-space: nowrap;
}
.ic { width: 16px; height: 16px; flex: none; }
.lat { font-family: "Liberation Mono", monospace; font-size: 11px; letter-spacing: -.6px; white-space: pre; }
.caret {
  display: inline-block;
  flex: none;
  width: 0;
  height: 0;
  margin-left: 5px;
  border: 3px solid transparent;
  border-top: 3px solid #111;
  border-bottom: 0;
}
.caret.light { border-top-color: #888; }
.more { flex: none; font: 700 12px/12px "Liberation Sans", sans-serif; margin-left: auto; align-self: flex-start; margin-top: 2px; }

/* title */
.titlebar {
  flex: none;
  height: 22px;
  display: flex;
  align-items: center;
  position: relative;
  box-sizing: border-box;
  border-top: 1px solid #444;
  background: linear-gradient(#a6bfd9, #c3d6e9);
}
.logo { width: 18px; height: 16px; margin-left: 2px; }
.title-text { margin-left: 6px; font: 13px/16px "Liberation Sans", "Noto Sans CJK SC", sans-serif; letter-spacing: -.15px; color: #222; }
.winbtns { position: absolute; right: 2px; top: 2px; display: flex; gap: 2px; }
.winbtn {
  width: 31px;
  height: 16px;
  box-sizing: border-box;
  border: 1px solid #55708c;
  border-radius: 2px;
  background: linear-gradient(#d4e0ec, #a8bdd2);
  display: flex;
  align-items: center;
  justify-content: center;
}
.winbtn.close { background: linear-gradient(#e59a8a, #c24a35); color: #fff; font: 700 11px/14px "Liberation Sans", sans-serif; }
.w-min { width: 9px; height: 3px; background: #fff; border: 1px solid #445; margin-top: 4px; box-sizing: border-box; }
.w-max { width: 9px; height: 9px; background: #fff; border: 1px solid #445; box-sizing: border-box; }

/* menu */
.menubar {
  flex: none;
  height: 30px;
  display: flex;
  align-items: center;
  padding-left: 7px;
  box-sizing: border-box;
  background: #f0f0f0;
  position: relative;
}
.menu { flex: none; }
.menu-tool { display: flex; align-items: center; gap: 4px; flex: none; }
.w-change { width: 87px; }
.w-guang { width: 63px; }
.hint {
  flex: none;
  width: 187px;
  height: 30px;
  box-sizing: border-box;
  padding: 7px 0 0 32px;
  background: #f8f8f8;
  border-radius: 3px;
  color: #2f6a0a;
}
.account {
  flex: none;
  width: 219px;
  height: 30px;
  margin-left: 2px;
  padding-left: 5px;
  box-sizing: border-box;
  display: flex;
  align-items: center;
  background: #f8f8f8;
  border-radius: 3px;
}
.mail { margin-left: 3px; font: 13px/16px "Liberation Sans", sans-serif; }
.bean { margin-left: 8px; }
.menubar > .more { margin-right: 4px; }

/* toolbars */
.tbar { display: flex; flex: none; }
.top { height: 26px; margin: 1px 0; gap: 0; }
.tgroup {
  display: flex;
  align-items: center;
  flex: none;
  box-sizing: border-box;
  border-radius: 3px;
  background: linear-gradient(#fbfbfb, #ececec);
}
.g1a { width: 150px; padding-left: 7px; }
.g1b { width: 603px; margin-left: 2px; padding-left: 5px; }
.g1c { width: 609px; margin-left: 2px; padding-right: 4px; }
.tool { display: flex; align-items: center; gap: 4px; flex: none; box-sizing: border-box; }
.tool.gray { color: #a8a8a8; }
.tool.white { height: 25px; background: #fff; padding-left: 4px; border-radius: 2px; }
.tool.on {
  height: 24px;
  padding-left: 3px;
  border: 1px solid #3d93e0;
  border-radius: 1px;
  background: #dcebfa;
}
.sep { flex: none; position: relative; height: 20px; }
.sep::before { content: ""; position: absolute; left: 0; top: 2px; bottom: 2px; width: 1px; background: #b8b8b8; }
.grip {
  flex: none;
  width: 3px;
  height: 16px;
  margin: 0 8px 0 3px;
  background: repeating-linear-gradient(#888 0 2px, transparent 2px 4px);
}
.r2 {
  height: 24px;
  margin: 3px 0 3px;
  align-items: center;
  background: linear-gradient(#fbfbfb, #ececec);
  border-radius: 3px;
  padding-right: 4px;
}
.r3 { height: 25px; margin-bottom: 4px; }
.g3a { width: 552px; padding-left: 8px; padding-right: 4px; }
.g3b { width: 212px; margin-left: 2px; padding-left: 9px; padding-right: 3px; }
.combo {
  flex: none;
  box-sizing: border-box;
  height: 23px;
  padding-left: 3px;
  display: flex;
  align-items: center;
  justify-content: space-between;
  padding-right: 3px;
  background: #fff;
}
.r4 { height: 26px; margin-bottom: 2px; }
.g4a { width: 743px; padding-right: 4px; }
.g4b { width: 23px; margin-left: 2px; }
.blank {
  flex: none;
  width: 56px;
  height: 20px;
  box-sizing: border-box;
  border: 1px solid #777;
  background: #f4f4f4;
  display: flex;
  align-items: center;
  justify-content: flex-end;
  padding-right: 4px;
}

/* layout */
.main { flex: 1; min-height: 0; display: flex; }
.panel { flex: none; display: flex; flex-direction: column; box-sizing: border-box; padding-top: 3px; }
.nav { width: 218px; }
.attr { width: 124px; margin-left: 2px; }
.mgr { width: 249px; margin-left: 2px; }
.work { flex: none; width: 768px; margin-left: 4px; display: flex; flex-direction: column; }

.phead {
  flex: none;
  height: 15px;
  display: flex;
  justify-content: space-between;
  align-items: center;
  font-size: 13px;
  line-height: 15px;
  box-sizing: border-box;
  border: 1px solid #b5b5b5;
  border-left: 0;
  background: #f0f0f0;
}
.phead.active { background: #0a56d8; color: #fff; border: 0; }
.ptools { display: flex; align-items: center; gap: 10px; padding-right: 4px; }
.pin { width: 6px; height: 8px; border: 1px solid #fff; border-top-width: 2px; box-sizing: border-box; display: block; position: relative; }
.pin.dark { border-color: #111; }
.pin::after { content: ""; position: absolute; left: 1px; top: 6px; width: 1px; height: 4px; background: #fff; }
.pin.dark::after { background: #111; }
.px { font: 15px/12px "Liberation Sans", sans-serif; color: #fff; width: 10px; text-align: center; }
.px.dark { color: #333; }

/* nav */
.navbtn {
  flex: none;
  display: block;
  width: 100%;
  height: 22px;
  margin-top: 1px;
  padding: 0;
  font: 12px/16px "Noto Sans CJK SC", sans-serif;
  color: #111;
  border: 1px solid #aaa;
  background: linear-gradient(#f8f8f8, #e8e8e8);
}
.navbtn.last { height: 13px; overflow: hidden; margin: 0; line-height: 20px; }
.treebox {
  flex: 1;
  min-height: 0;
  margin-top: 1px;
  display: flex;
  flex-direction: column;
  border: 1px solid #aaa;
  background: #fff;
  box-sizing: border-box;
  border-right: 1px solid #bbb;
}
.expand { flex: none; height: 28px; display: flex; align-items: center; gap: 5px; padding-left: 5px; margin-top: -1px; }
.treewrap { flex: 1; min-height: 0; display: flex; }
.tree { flex: 1; overflow: hidden; min-width: 0; }
.trow { height: 16px; display: flex; align-items: center; position: relative; }
.tri-closed { flex: none; width: 6px; height: 10px; margin-left: 12px; }
.tri {
  flex: none;
  width: 0;
  height: 0;
}
.tri.down {
  margin-left: 11px;
  border: 0;
  border-bottom: 6px solid #333;
  border-left: 6px solid transparent;
  margin-right: 1px;
}
.dots { flex: none; height: 0; border-top: 1px dotted #777; }
.d1 { width: 7px; }
.folder { flex: none; width: 16px; height: 14px; margin: 0 5px 0 0; }
.newbox { flex: none; width: 15px; height: 15px; margin-left: 6px; }
.newtag {
  margin-top: -7px;
  margin-left: 2px;
  font: 700 8px/8px "Liberation Sans", sans-serif;
  color: #7a5a00;
  background: #ffe13a;
}
.kids { margin-left: 14px; }
.kids.cont { border-left: 1px dotted #777; margin-left: 14px; }
.kids-in { margin-left: 18px; border-left: 1px dotted #777; }
.d2 { width: 11px; }
.kicon { flex: none; width: 16px; height: 16px; margin-right: 4px; }
.tlabel { flex: none; }
.tlabel.sel {
  margin-left: -3px;
  padding: 0 3px;
  background: #f2f2f2;
  border: 1px solid #ddd;
  border-radius: 3px;
  line-height: 13px;
}
.vscroll { flex: none; width: 16px; display: flex; flex-direction: column; margin-right: 4px; background: #f2f2f2; }
.sarrow { flex: none; height: 18px; display: flex; align-items: center; justify-content: center; }
.sarrow::after { content: ""; border: 4px solid transparent; }
.sarrow.up::after { border-bottom: 4px solid #555; border-top: 0; }
.sarrow.dn::after { border-top: 4px solid #555; border-bottom: 0; }
.thumb {
  height: 395px;
  box-sizing: border-box;
  border: 1px solid #999;
  border-radius: 2px;
  background: linear-gradient(90deg, #e8e8e8, #c8c8c8);
  display: flex;
  align-items: center;
  justify-content: center;
}
.thumb i { width: 7px; height: 7px; background: repeating-linear-gradient(#555 0 1px, transparent 1px 3px); }
.vscroll .dn { margin-top: auto; }

/* property grid */
.agrid, .sheet { flex: 1; min-height: 0; background: #fff; box-sizing: border-box; position: relative; overflow: hidden; }
.agrid { margin-top: 2px; border: 1px solid #aaa; border-top-color: #ccc; padding: 0 0 0 1px; }
.arow { height: 19px; display: flex; }
.arow.ahead { height: 23px; }
.num {
  flex: none;
  width: 21px;
  box-sizing: border-box;
  border-right: 1px solid #ccc;
  border-bottom: 1px solid #ccc;
  background: linear-gradient(#fafafa, #ececec);
  text-align: center;
  font: 12px/18px "Liberation Mono", monospace;
  letter-spacing: -.6px;
}
.cell {
  flex: 1;
  box-sizing: border-box;
  border-bottom: 1px solid #ccc;
  border-right: 1px solid #ccc;
  padding-left: 2px;
  overflow: hidden;
  line-height: 18px;
}
.cell sup { font-size: 7px; line-height: 0; }
.hd {
  padding: 3px 0 0 41px;
  background: linear-gradient(#fbe3b0, #f3bd62);
  color: #5a0f7a;
  font-size: 12px;
}
.arow.cur .num, .srow.cur .num { background: #fbd89c; color: #5a0f7a; }
.arow.cur .cell { background: #deedfb; }
.hscroll { position: absolute; left: 0; right: 0; bottom: 0; height: 11px; background: #f0f0f0; }
.hscroll i { position: absolute; left: 53px; width: 14px; top: 0; bottom: 0; background: #ddd; border: 1px solid #aaa; box-sizing: border-box; }

/* drawings */
.tabs { flex: none; height: 21px; padding-left: 2px; display: flex; align-items: flex-end; }
.tab {
  height: 16px;
  line-height: 15px;
  width: 91px;
  text-align: center;
  box-sizing: border-box;
  border: 1px solid #aaa;
  border-bottom: 0;
  background: #e4e4e4;
}
.tab.on { height: 21px; width: 87px; line-height: 20px; background: #f5f5f5; margin-right: 0; }
.mtools {
  flex: none;
  height: 22px;
  margin: 5px 3px 0 6px;
  display: flex;
  gap: 2px;
  box-sizing: border-box;
  border: 1px solid #bbb;
  background: linear-gradient(#f8f8f8, #e6e6e6);
  font-size: 12px;
  line-height: 20px;
}
.mbtn { flex: none; box-sizing: border-box; text-align: center; border-right: 1px solid #bbb; }
.b1 { width: 55px; }
.b2 { width: 11px; }
.b3 { width: 57px; }
.mmore { margin-right: 1px; line-height: 12px; }
.sheet { margin: 3px 3px 0 6px; border: 1px solid #aaa; padding: 1px 0 0 1px; }
.srow { height: 19px; display: flex; }
.srow.shead { height: 26px; }
.srow.shead .num { line-height: 25px; }
.sname {
  flex: none;
  width: 150px;
  box-sizing: border-box;
  border-right: 1px solid #ccc;
  border-bottom: 1px solid #ccc;
  line-height: 18px;
  position: relative;
  overflow: hidden;
}
.hd2 { text-align: center; line-height: 25px; background: linear-gradient(#fafafa, #ececec); }
.sratio {
  flex: none;
  width: 57px;
  box-sizing: border-box;
  border-right: 1px solid #ccc;
  border-bottom: 1px solid #ccc;
  padding-left: 2px;
  line-height: 18px;
  position: relative;
}
.hd3 { padding: 0; text-align: center; line-height: 25px; background: linear-gradient(#fbe3b0, #f3bd62); color: #5a0f7a; }
.lv0 { padding-left: 20px; }
.lv1 { padding-left: 24px; }
.lv2 { padding-left: 30px; }
.minus {
  position: absolute;
  left: 2px;
  top: 3px;
  width: 12px;
  height: 12px;
  box-sizing: border-box;
  border: 1px solid #bbb;
  background: linear-gradient(90deg, transparent 2px, #333 2px, #333 9px, transparent 9px) center/100% 1px no-repeat, #f0f0f0;
}
.branch { position: absolute; left: 8px; top: -1px; bottom: -1px; width: 16px; border-left: 1px solid #aaa; }
.branch.end { bottom: 9px; }
.branch::after { content: ""; position: absolute; left: 0; right: 0; top: 10px; height: 1px; background: #aaa; }
.srow.cur .sname { background: #067a10; color: #111; }
.srow.cur .sname .branch, .srow.cur .sname .branch::after { border-color: #ccc; }
.srow.cur .sname .branch::after { background: #ddd; }
.srow.cur .sratio { background: #07801f; outline: 3px solid #7f7f7f; outline-offset: -3px; padding-left: 2px; overflow: visible; }
.handle { position: absolute; right: -2px; bottom: -3px; width: 4px; height: 4px; background: #7f7f7f; border: 1px solid #fff; }

/* canvas */
.canvas { flex: 1; min-height: 0; position: relative; background: #000; overflow: hidden; }
.cad { display: block; }
.cadtext text { font: 15px "Liberation Mono", monospace; }
.boxtext { font: 16px "Liberation Mono", monospace; }
.bubble { font: 16px "Liberation Mono", monospace; }
.ime {
  position: absolute;
  right: 0;
  top: 0;
  width: 79px;
  height: 18px;
  background: #1c1c1c;
  display: flex;
  align-items: center;
  gap: 5px;
  color: #fff;
  font: 11px/14px "Liberation Mono", monospace;
}
.imegrip { width: 6px; height: 10px; margin-left: 5px; background: repeating-linear-gradient(#777 0 1px, transparent 1px 3px); }
.ch { margin-left: 3px; margin-right: 5px; }
.imearr { width: 6px; height: 12px; margin-left: 5px; border-top: 2px solid #fff; box-sizing: border-box; }

.levels {
  position: absolute;
  right: 0;
  top: 97px;
  width: 9px;
  height: 63px;
  box-sizing: border-box;
  padding: 4px 2px;
  display: flex;
  flex-direction: column;
  gap: 2px;
  background: #3e4a50;
  border-radius: 3px 0 0 3px;
}
.levels i { flex: 1; background: #6d7a80; }
.levels i.lit { background: #55c060; }
</style>

<style>
body { margin: 0; overflow: hidden; }
</style>
